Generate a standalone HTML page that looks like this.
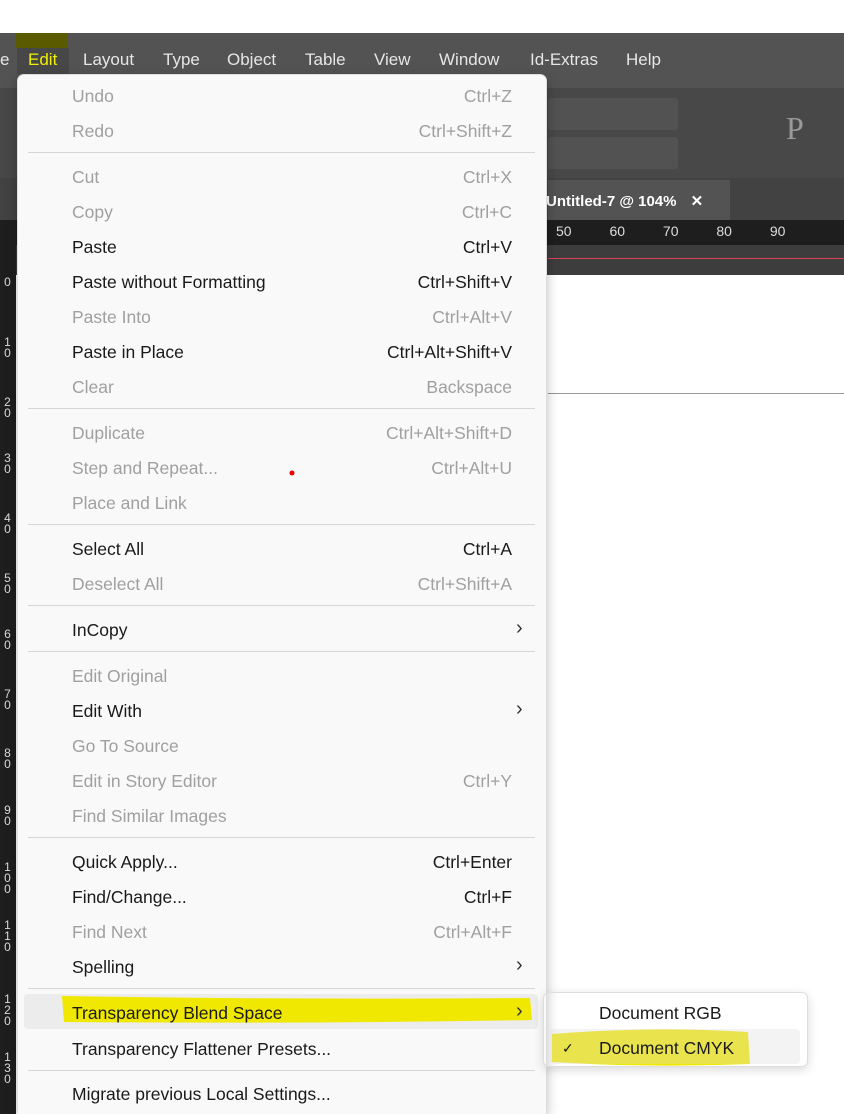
<!DOCTYPE html>
<html style="overflow:hidden;height:1114px"><head><style>
*{margin:0;padding:0;box-sizing:border-box}
body{width:844px;height:1114px;position:relative;overflow:hidden;background:#fff;font-family:"Segoe UI","Liberation Sans",sans-serif}
.a{position:absolute}
.mb{color:#e6e6e6;font-size:17px;top:50px}
.menu{left:17px;top:74px;width:530px;height:1040px;background:#f9f9f9;border:1px solid #ddd;border-bottom:none;border-radius:7px 7px 0 0;box-shadow:0 4px 12px rgba(0,0,0,.25)}
.it{position:absolute;left:72px;font-size:17.5px;color:#1a1a1a;line-height:22px;white-space:nowrap}
.sc{position:absolute;right:332px;font-size:17.5px;color:#1a1a1a;line-height:22px;text-align:right;white-space:nowrap}
.d{color:#a0a0a0}
.sep{position:absolute;left:28px;width:507px;height:1px;background:#d6d6d6}
.ar{position:absolute;left:516px;font-size:20px;color:#333;line-height:22px}
.rn{position:absolute;left:0;width:15px;color:#ddd;font-size:12px;line-height:11px;text-align:center}
</style></head><body>
<div class="a" style="left:0;top:33px;width:844px;height:55px;background:#535353"></div>
<div class="a" style="left:16px;top:33px;width:52px;height:15px;background:#5a5a00"></div>
<div class="a" style="left:17px;top:48px;width:52px;height:26px;background:#474747"></div>
<div class="a" style="left:0;top:88px;width:844px;height:90px;background:#484848"></div>
<div class="a" style="left:548px;top:98px;width:130px;height:32px;background:#525252;border-radius:3px"></div>
<div class="a" style="left:548px;top:137px;width:130px;height:32px;background:#525252;border-radius:3px"></div>
<div class="a" style="left:0;top:178px;width:844px;height:42px;background:#424242"></div>
<div class="a" style="left:548px;top:180px;width:182px;height:40px;background:#535353"></div>
<div class="a" style="left:546px;top:192px;color:#fff;font-weight:bold;font-size:15px">Untitled-7 @ 104% <span style="margin-left:10px">✕</span></div>
<div class="a" style="left:0;top:220px;width:844px;height:25px;background:#1e1e1e"></div>
<div class="a" style="left:556px;top:223px;color:#ddd;font-size:14px;word-spacing:34px">50 60 70 80 90</div>
<div class="a" style="left:0;top:245px;width:844px;height:30px;background:#3d3d3d"></div>
<div class="a" style="left:548px;top:258px;width:296px;height:1px;background:#e0405a"></div>
<div class="a" style="left:0;top:245px;width:16px;height:869px;background:#1e1e1e"></div>
<div class="a" style="left:548px;top:393px;width:296px;height:1px;background:#999"></div>
<div class="rn" style="top:277px">0</div><div class="rn" style="top:337px">1<br>0</div><div class="rn" style="top:397px">2<br>0</div><div class="rn" style="top:453px">3<br>0</div><div class="rn" style="top:513px">4<br>0</div><div class="rn" style="top:573px">5<br>0</div><div class="rn" style="top:629px">6<br>0</div><div class="rn" style="top:689px">7<br>0</div><div class="rn" style="top:748px">8<br>0</div><div class="rn" style="top:805px">9<br>0</div><div class="rn" style="top:862px">1<br>0<br>0</div><div class="rn" style="top:920px">1<br>1<br>0</div><div class="rn" style="top:994px">1<br>2<br>0</div><div class="rn" style="top:1052px">1<br>3<br>0</div>
<div class="a mb" style="left:0">e</div>
<div class="a mb" style="left:28px;color:#f0f000">Edit</div>
<div class="a mb" style="left:83px">Layout</div>
<div class="a mb" style="left:163px">Type</div>
<div class="a mb" style="left:227px">Object</div>
<div class="a mb" style="left:305px">Table</div>
<div class="a mb" style="left:374px">View</div>
<div class="a mb" style="left:439px">Window</div>
<div class="a mb" style="left:530px">Id-Extras</div>
<div class="a mb" style="left:626px">Help</div>
<div class="a" style="left:786px;top:110px;color:#999;font-family:'Liberation Serif',serif;font-size:32px">P</div>
<div class="a menu"></div>
<div class="a" style="left:24px;top:994px;width:514px;height:35px;background:#ececec;border-radius:4px"></div>
<svg class="a" style="left:0;top:0" width="844" height="1114"><path d="M62 996 Q300 1000 530 998 L532 1020 Q300 1024 64 1022 Z" fill="#f0e800"/><path d="M552 1034 Q650 1026 748 1032 L750 1064 Q650 1068 552 1062 Z" fill="#f0e800"/><circle cx="292" cy="473" r="2.5" fill="#e00"/></svg>
<div class="it d" style="top:85px">Undo</div><div class="sc d" style="top:85px">Ctrl+Z</div>
<div class="it d" style="top:120px">Redo</div><div class="sc d" style="top:120px">Ctrl+Shift+Z</div>
<div class="sep" style="top:152px"></div>
<div class="it d" style="top:166px">Cut</div><div class="sc d" style="top:166px">Ctrl+X</div>
<div class="it d" style="top:201px">Copy</div><div class="sc d" style="top:201px">Ctrl+C</div>
<div class="it" style="top:236px">Paste</div><div class="sc" style="top:236px">Ctrl+V</div>
<div class="it" style="top:271px">Paste without Formatting</div><div class="sc" style="top:271px">Ctrl+Shift+V</div>
<div class="it d" style="top:306px">Paste Into</div><div class="sc d" style="top:306px">Ctrl+Alt+V</div>
<div class="it" style="top:341px">Paste in Place</div><div class="sc" style="top:341px">Ctrl+Alt+Shift+V</div>
<div class="it d" style="top:376px">Clear</div><div class="sc d" style="top:376px">Backspace</div>
<div class="sep" style="top:408px"></div>
<div class="it d" style="top:422px">Duplicate</div><div class="sc d" style="top:422px">Ctrl+Alt+Shift+D</div>
<div class="it d" style="top:457px">Step and Repeat...</div><div class="sc d" style="top:457px">Ctrl+Alt+U</div>
<div class="it d" style="top:492px">Place and Link</div>
<div class="sep" style="top:524px"></div>
<div class="it" style="top:538px">Select All</div><div class="sc" style="top:538px">Ctrl+A</div>
<div class="it d" style="top:573px">Deselect All</div><div class="sc d" style="top:573px">Ctrl+Shift+A</div>
<div class="sep" style="top:605px"></div>
<div class="it" style="top:619px">InCopy</div><div class="ar" style="top:617px">›</div>
<div class="sep" style="top:651px"></div>
<div class="it d" style="top:665px">Edit Original</div>
<div class="it" style="top:700px">Edit With</div><div class="ar" style="top:698px">›</div>
<div class="it d" style="top:735px">Go To Source</div>
<div class="it d" style="top:770px">Edit in Story Editor</div><div class="sc d" style="top:770px">Ctrl+Y</div>
<div class="it d" style="top:805px">Find Similar Images</div>
<div class="sep" style="top:837px"></div>
<div class="it" style="top:851px">Quick Apply...</div><div class="sc" style="top:851px">Ctrl+Enter</div>
<div class="it" style="top:886px">Find/Change...</div><div class="sc" style="top:886px">Ctrl+F</div>
<div class="it d" style="top:921px">Find Next</div><div class="sc d" style="top:921px">Ctrl+Alt+F</div>
<div class="it" style="top:956px">Spelling</div><div class="ar" style="top:954px">›</div>
<div class="sep" style="top:988px"></div>
<div class="it" style="top:1002px">Transparency Blend Space</div><div class="ar" style="top:1000px">›</div>
<div class="it" style="top:1038px">Transparency Flattener Presets...</div>
<div class="sep" style="top:1070px"></div>
<div class="it" style="top:1083px">Migrate previous Local Settings...</div>
<div class="a" style="left:543px;top:992px;width:265px;height:75px;border:1px solid #ddd;border-radius:6px;box-shadow:0 3px 10px rgba(0,0,0,.15)"></div>
<div class="a" style="left:550px;top:1029px;width:250px;height:35px;background:rgba(220,220,220,.35);border-radius:4px"></div>
<div class="it" style="left:599px;top:1002px">Document RGB</div>
<div class="it" style="left:562px;top:1037px;font-size:14px">✓</div>
<div class="it" style="left:599px;top:1037px">Document CMYK</div>
</body></html>
